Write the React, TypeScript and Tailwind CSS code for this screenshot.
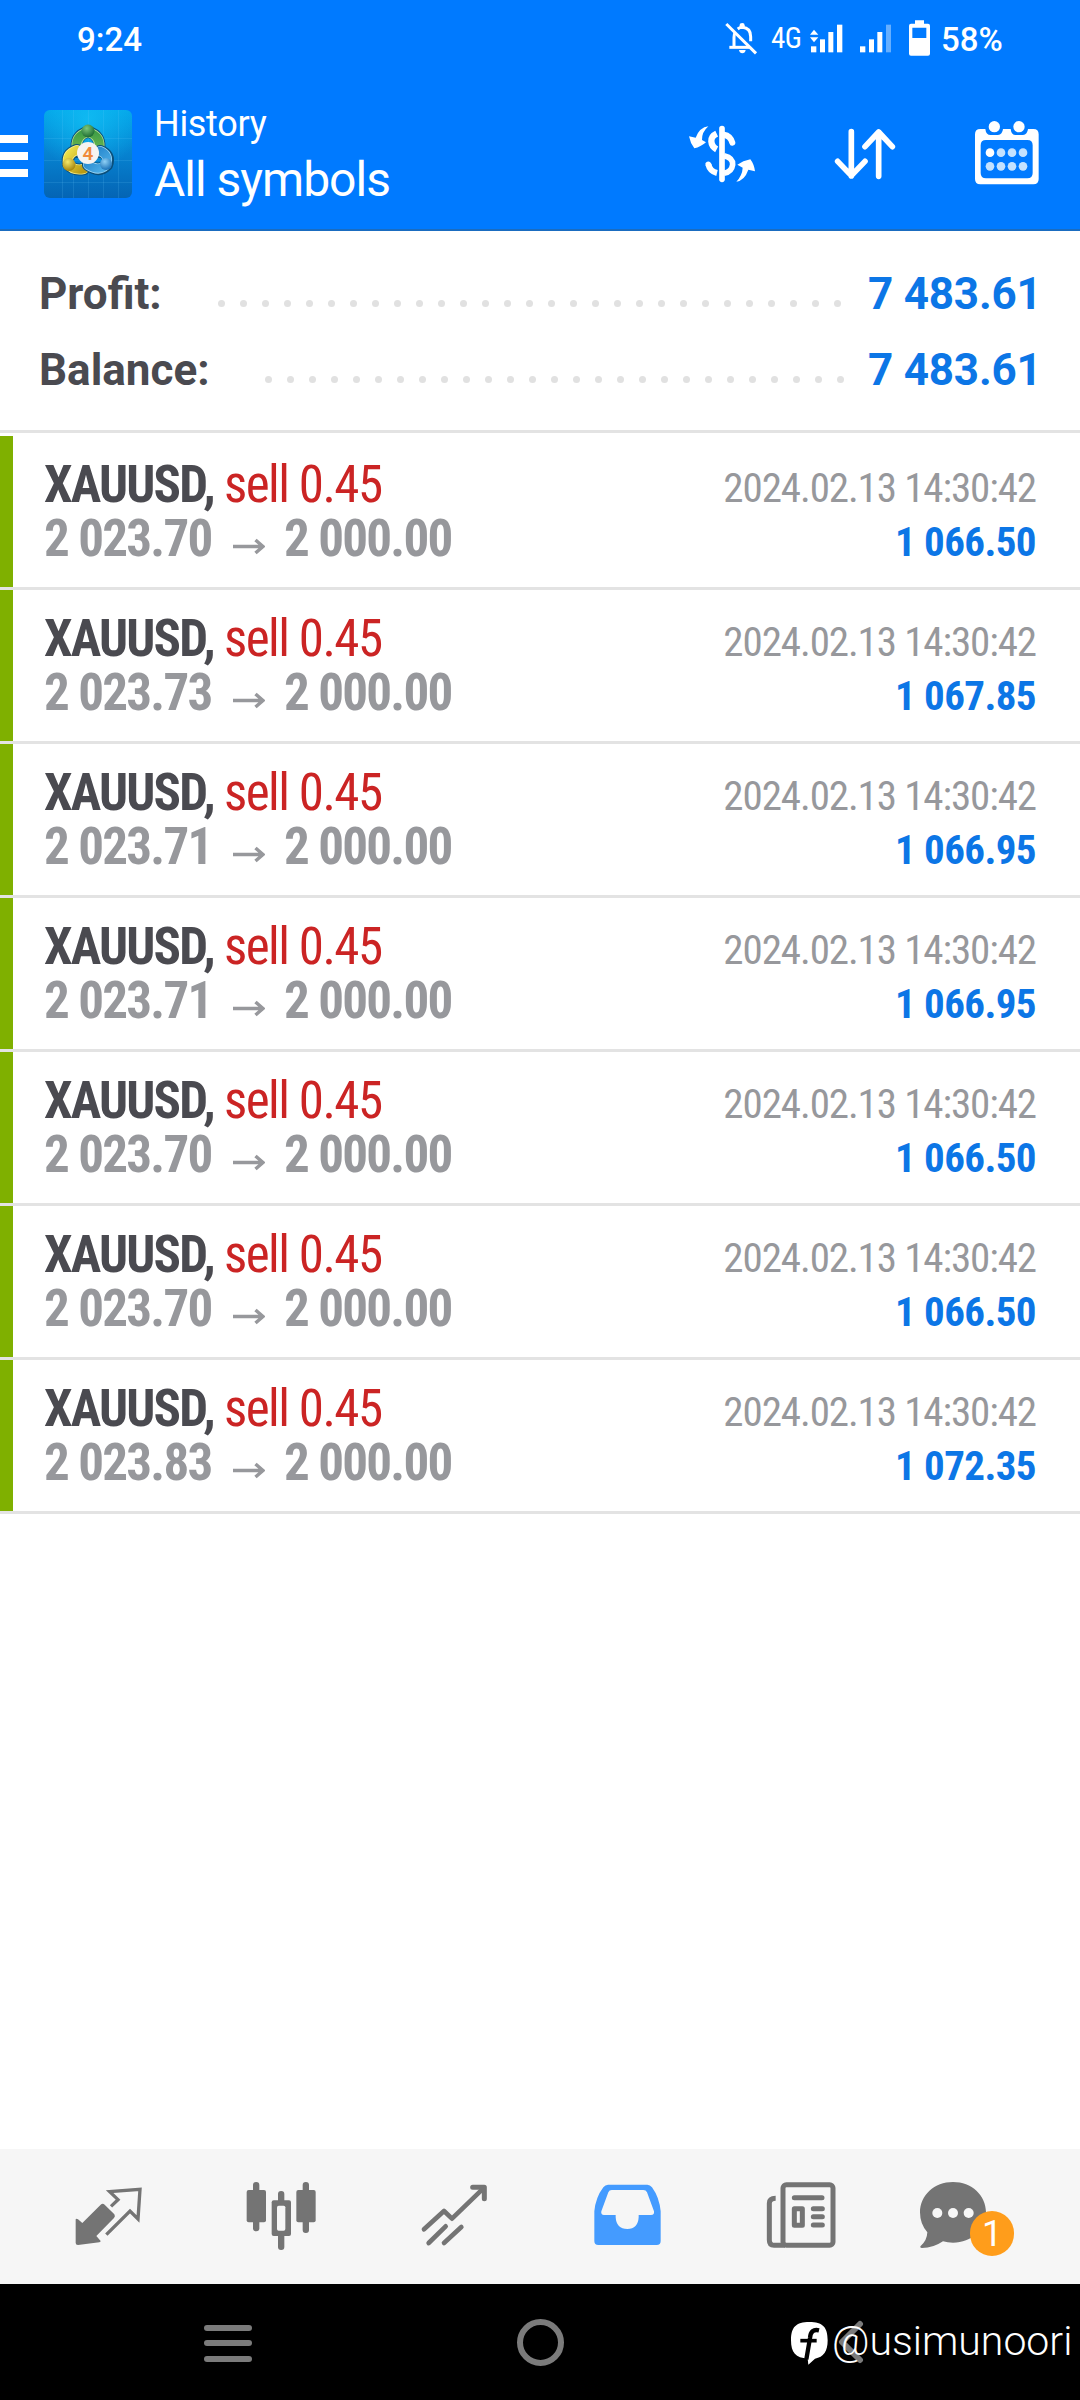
import { ReactNode } from "react";

interface Deal {
  id: number;
  symbol: string;
  side: string;
  volume: string;
  open: string;
  close: string;
  time: string;
  profit: string;
}

const deals: Deal[] = [
  { id: 1, symbol: "XAUUSD", side: "sell", volume: "0.45", open: "2 023.70", close: "2 000.00", time: "2024.02.13 14:30:42", profit: "1 066.50" },
  { id: 2, symbol: "XAUUSD", side: "sell", volume: "0.45", open: "2 023.73", close: "2 000.00", time: "2024.02.13 14:30:42", profit: "1 067.85" },
  { id: 3, symbol: "XAUUSD", side: "sell", volume: "0.45", open: "2 023.71", close: "2 000.00", time: "2024.02.13 14:30:42", profit: "1 066.95" },
  { id: 4, symbol: "XAUUSD", side: "sell", volume: "0.45", open: "2 023.71", close: "2 000.00", time: "2024.02.13 14:30:42", profit: "1 066.95" },
  { id: 5, symbol: "XAUUSD", side: "sell", volume: "0.45", open: "2 023.70", close: "2 000.00", time: "2024.02.13 14:30:42", profit: "1 066.50" },
  { id: 6, symbol: "XAUUSD", side: "sell", volume: "0.45", open: "2 023.70", close: "2 000.00", time: "2024.02.13 14:30:42", profit: "1 066.50" },
  { id: 7, symbol: "XAUUSD", side: "sell", volume: "0.45", open: "2 023.83", close: "2 000.00", time: "2024.02.13 14:30:42", profit: "1 072.35" },
];

/* STATUS BAR */

function StatusBar() {
  return (
    <div className="flex h-[78px] pl-[77px] font-medium text-[33px] leading-[39px]">
      <span className="pt-5">9:24</span>

      <div className="ml-auto flex pr-[75px]">
        {/* muted bell */}
        <svg className="w-10 h-[78px]" viewBox="180 0 120 234" fill="none" stroke="white" strokeWidth="9">
          <path d="M199 72 L288 160" />
          <path d="M208 142 H268" />
          <path d="M222 140 V112 Q222 104 225 98" />
          <path d="M233 87 Q240 82 247 82 Q272 84 272 110 V124" />
          <path d="M239 76 Q239 69 247 69 Q254 69 254 76 V84 H239 Z" fill="white" stroke="none" />
          <path d="M237 150 H257 Q255 160 247 160 Q239 160 237 150 Z" fill="white" stroke="none" />
        </svg>

        <span className="ml-[11px] w-[34px] pt-[19px] text-[29px] font-normal font-stretch-condensed tracking-[-0.5px]">4G</span>

        {/* both SIM signals and battery */}
        <svg className="w-[130px] h-[78px]" viewBox="435 0 390 234" fill="white">
          <path d="M462 89 L475 104 H450 Z" />
          <path d="M450 112 H475 L462 127 Z" />
          <rect x="453" y="139" width="16" height="18" />
          <rect x="480" y="118" width="15" height="39" />
          <rect x="505" y="96" width="15" height="61" />
          <rect x="531" y="74" width="16" height="83" />
          <rect x="600" y="139" width="16" height="18" />
          <rect x="627" y="118" width="15" height="39" />
          <rect x="652" y="96" width="15" height="61" />
          <rect x="678" y="74" width="15" height="83" opacity="0.4" />
          <path
            fillRule="evenodd"
            d="M765 61 H792 V71 H804 Q810 71 810 77 V161 Q810 167 804 167 H753 Q747 167 747 161 V77 Q747 71 753 71 H765 Z M757 83 V114 H799 V83 Z"
          />
        </svg>

        <span className="ml-[6px] w-[64px] pt-5 font-stretch-[93%]">58%</span>
      </div>
    </div>
  );
}

/* HEADER */

function AppLogo() {
  return (
    <svg className="ml-4 mt-[32px] w-[88px] h-[88px]" viewBox="0 0 88 88">
      <defs>
        <linearGradient id="sky" x1="0" y1="0" x2="0" y2="1">
          <stop offset="0" stopColor="#03a5e8" />
          <stop offset="0.5" stopColor="#0682d0" />
          <stop offset="1" stopColor="#0464b4" />
        </linearGradient>
        <radialGradient id="glow" cx="0.5" cy="0.1" r="0.6">
          <stop offset="0" stopColor="#12bff5" stopOpacity="0.8" />
          <stop offset="1" stopColor="#12bff5" stopOpacity="0" />
        </radialGradient>
        <linearGradient id="green" x1="0" y1="0" x2="0" y2="1">
          <stop offset="0" stopColor="#3f9d46" />
          <stop offset="1" stopColor="#6fb850" />
        </linearGradient>
        <linearGradient id="yellow" x1="0" y1="0" x2="1" y2="1">
          <stop offset="0" stopColor="#efe34c" />
          <stop offset="1" stopColor="#b99a14" />
        </linearGradient>
        <linearGradient id="blue" x1="0" y1="0" x2="1" y2="1">
          <stop offset="0" stopColor="#1f7fc8" />
          <stop offset="1" stopColor="#4fb0e8" />
        </linearGradient>
        <radialGradient id="greenBall" cx="0.4" cy="0.3" r="0.7">
          <stop offset="0" stopColor="#7cc77b" />
          <stop offset="1" stopColor="#1c6b31" />
        </radialGradient>
        <radialGradient id="yellowBall" cx="0.4" cy="0.3" r="0.7">
          <stop offset="0" stopColor="#f5e96a" />
          <stop offset="1" stopColor="#a5840d" />
        </radialGradient>
        <radialGradient id="blueBall" cx="0.4" cy="0.3" r="0.7">
          <stop offset="0" stopColor="#8fd0f5" />
          <stop offset="1" stopColor="#1b72b8" />
        </radialGradient>
      </defs>
      <rect width="88" height="88" rx="6" fill="url(#sky)" />
      <rect width="88" height="88" rx="6" fill="url(#glow)" />
      <path d="M0 28.500H88M0 50.500H88M0 72.500H88M18.500 0V88M29.500 0V88M44.500 0V88M59.500 0V88M74.500 0V88" stroke="#6fd0ff" strokeOpacity="0.15" />
      <g fill="none" strokeLinecap="round">
        <path d="M33 42 Q30 25 44 22 Q58 25 55 42" stroke="#0b4f7a" strokeWidth="12" />
        <path d="M33 41 Q30 26 44 22 Q58 26 55 41" stroke="#b5e094" strokeWidth="10" />
        <path d="M33 41 Q30 26 44 22 Q58 26 55 41" stroke="url(#green)" strokeWidth="8.500" />
        <path d="M33 40 Q22 44 24 54 Q29 61 40 59" stroke="#0b4f7a" strokeWidth="12" />
        <path d="M33 40 Q22 44 24 54 Q29 61 40 59" stroke="#f8f18c" strokeWidth="10" />
        <path d="M33 40 Q22 44 24 54 Q29 61 40 59" stroke="url(#yellow)" strokeWidth="8.500" />
        <path d="M56 41 Q67 45 63 55 Q55 63 44 55" stroke="#0b4f7a" strokeWidth="12" />
        <path d="M56 41 Q66 45 62 55 Q55 62 44 55" stroke="#9bd5f5" strokeWidth="10" />
        <path d="M56 41 Q66 45 62 55 Q55 62 44 55" stroke="url(#blue)" strokeWidth="8.500" />
      </g>
      <circle cx="44" cy="21" r="6.500" fill="url(#greenBall)" />
      <circle cx="25" cy="54.500" r="6.500" fill="url(#yellowBall)" />
      <circle cx="62" cy="54" r="6" fill="url(#blueBall)" />
      <circle cx="44" cy="43" r="11" fill="#f6f3f1" />
      <text x="44" y="50" textAnchor="middle" fontFamily="Roboto" fontSize="19" fontWeight="600" fill="#f08a3c">4</text>
    </svg>
  );
}

function Header() {
  return (
    <header className="h-[231px] bg-[#007aff] text-white border-b-2 border-[#1a6cc0]">
      <StatusBar />

      <div className="flex h-[151px]">
        <div className="mt-[57px] flex flex-col gap-[9px]">
          <span className="w-7 h-2 bg-white" />
          <span className="w-7 h-2 bg-white" />
          <span className="w-7 h-2 bg-white" />
        </div>

        <AppLogo />

        <div className="ml-[22px] pt-[25px]">
          <p className="text-[36px] leading-[42px] tracking-[-0.3px]">History</p>
          <p className="mt-[7px] text-[48px] leading-[56px] tracking-[-1px]">All symbols</p>
        </div>

        {/* ACTIONS */}
        <div className="ml-auto flex pr-[33px]">
          <svg className="w-[90px] h-[151px]" viewBox="60 234 270 453">
            <path d="M186 386 V538" stroke="white" strokeWidth="17" strokeLinecap="round" />
            <g fill="none" stroke="white" strokeWidth="17">
              <path d="M170 401 Q153 409 154 424 Q155 440 170 448" strokeWidth="19" />
              <path d="M192 404 Q211 407 217 428" strokeWidth="18" strokeLinecap="round" />
              <path d="M192 467 Q220 474 218 494 Q215 516 192 520" />
              <path d="M145 493 Q150 514 171 519" strokeWidth="18" />
              <path d="M145 493 L146 495" strokeLinecap="round" />
            </g>
            <path d="M145 379 Q119 382 107 413 L87 409 Q91 430 103 445 Q122 441 138 427 L126 420 Q125 397 145 379 Z" fill="white" />
            <path d="M229 545 Q254 541 265 509 L285 514 Q282 492 271 478 Q249 482 232 494 L248 503 Q247 526 229 545 Z" fill="white" />
          </svg>

          <svg className="ml-[55px] w-20 h-[151px]" viewBox="495 234 240 453" fill="none" stroke="white" strokeWidth="17" strokeLinecap="round" strokeLinejoin="round">
            <path d="M574 395 V528 M533 484 L574 527 L615 484" />
            <path d="M656 529 V396 M615 440 L656 396 L697 440" />
          </svg>

          <svg className="ml-[62px] w-20 h-[151px]" viewBox="921 234 240 453" fill="white">
            <path
              fillRule="evenodd"
              d="M961 387 H976 Q978 405 992 405 H1014 Q1027 404 1029 387 H1052 Q1054 405 1067 405 H1089 Q1102 404 1104 387 H1120 Q1136 387 1136 403 V537 Q1136 553 1120 553 H961 Q945 553 945 537 V403 Q945 387 961 387 Z M978 420 Q962 420 962 436 V519 Q962 535 978 535 H1102 Q1118 535 1118 519 V436 Q1118 420 1102 420 Z"
            />
            <circle cx="1003" cy="380" r="17" />
            <circle cx="1077" cy="380" r="17" />
            <circle cx="990" cy="458" r="13" />
            <g fill="#c4e2ff">
              <circle cx="1023" cy="458" r="13" />
              <circle cx="1056" cy="458" r="13" />
              <circle cx="1089" cy="458" r="13" />
              <circle cx="990" cy="499" r="13" />
              <circle cx="1023" cy="499" r="13" />
              <circle cx="1056" cy="499" r="13" />
              <circle cx="1089" cy="499" r="13" />
            </g>
          </svg>
        </div>
      </div>
    </header>
  );
}

/* SUMMARY */

function SummaryRow({ label, value, dots, offset }: { label: string; value: string; dots: number; offset: string }) {
  return (
    <div className="flex h-[76px] text-[44px] leading-[76px] font-bold whitespace-nowrap">
      <span className="text-[#4a4a50]">{label}</span>
      <div className={`ml-auto flex gap-[15px] pt-[44px] ${offset}`}>
        {Array.from({ length: dots }, (_, i) => (
          <span key={i} className="w-[7px] h-[7px] rounded-full bg-[#e1e1e1]" />
        ))}
      </div>
      <span className="w-[169px] text-[#0c76e6] tracking-[-0.2px]">{value}</span>
    </div>
  );
}

/* DEALS */

function DealRow({ deal }: { deal: Deal }) {
  return (
    <li className="flex h-[154px] border-b-3 border-[#e3e3e3] font-stretch-condensed">
      <span className="w-[13px] bg-[#7fb000]" />

      <div className="pl-[31px] pt-[22px] text-[51px] leading-[54px] whitespace-pre">
        <p>
          <span className="font-bold text-[#4a4a50] tracking-[-1.8px]">{deal.symbol}, </span>
          <span className="text-[#cb2424] tracking-[-1.5px]">{deal.side} {deal.volume}</span>
        </p>
        <p className="flex font-bold text-[#97989c] tracking-[-1.7px]">
          <span className="w-[187px]">{deal.open}</span>
          <svg className="mt-[20px] w-[34px] h-[28px]" viewBox="0 0 34 28" fill="none" stroke="#97989c" strokeWidth="3.500">
            <path d="M2 14.500 H32 M24.500 8 L32 14.500 L24.500 21" />
          </svg>
          <span className="ml-[19px]">{deal.close}</span>
        </p>
      </div>

      <div className="ml-auto pr-11 pt-[25px] text-right text-[41px] leading-[54px]">
        <p className="text-[#97989c] tracking-[-1.1px]">{deal.time}</p>
        <p className="font-bold text-[#0c76e6] tracking-[-0.6px]">{deal.profit}</p>
      </div>
    </li>
  );
}

/* BOTTOM TABS */

function Tab({ box, badge, children }: { box: string; badge?: number; children: ReactNode }) {
  return (
    <div className="relative w-[173px] h-[135px]">
      <svg className="w-[173px] h-[135px]" viewBox={box} fill="#747474">
        {children}
      </svg>
      {badge && (
        <span className="absolute left-[83px] top-[62px] w-[44px] h-[45px] rounded-full bg-[#ff9d1b] text-white text-[36px] leading-[46px] text-center">
          {badge}
        </span>
      )}
    </div>
  );
}

function BottomTabs() {
  return (
    <nav className="flex h-[135px] pl-[22px] bg-[#f6f6f6]">
      {/* quotes */}
      <Tab box="66 27 519 405">
        <path d="M302 194 Q308 189 314 194 L343 223 Q347 229 342 234 L289 288 L302 303 Q302 306 298 307 L234 315 Q227 315 227 309 V238 Q229 234 234 238 L247 249 Z" />
        <path d="M333 199 L354 179 L329 155 L420 148 L414 237 L390 213 L319 284" fill="none" stroke="#747474" strokeWidth="10" strokeLinejoin="miter" />
      </Tab>

      {/* charts */}
      <Tab box="585 27 519 405">
        <rect x="759" y="126" width="19" height="148" rx="9" />
        <rect x="740" y="150" width="58" height="97" rx="6" />
        <rect x="908" y="126" width="19" height="153" rx="9" />
        <rect x="889" y="150" width="58" height="97" rx="6" />
        <rect x="834" y="153" width="19" height="177" rx="9" />
        <rect x="815" y="181" width="58" height="107" rx="6" />
        <rect x="831" y="197" width="25" height="75" rx="5" fill="#f6f6f6" />
      </Tab>

      {/* trade */}
      <Tab box="24 27 519 405">
        <g fill="none" stroke="#747474" strokeWidth="14" strokeLinecap="round">
          <path d="M192 268 L252 213 L276 236 L370 145" strokeLinejoin="round" />
          <path d="M338 142 H373 V176" strokeWidth="15" strokeLinejoin="round" />
          <path d="M206 309 L257 259" />
          <path d="M252 309 L304 261" />
        </g>
      </Tab>

      {/* history, selected */}
      <Tab box="543 27 519 405">
        <path
          fill="#449bff"
          fillRule="evenodd"
          d="M744 134 H862 Q870 134 876 142 Q898 172 902 214 V303 Q902 315 890 315 H715 Q703 315 703 303 V214 Q707 172 730 142 Q736 134 744 134 Z M755 150 Q748 150 745 157 L724 214 Q722 225 732 225 H767 V232 Q769 267 802 267 Q834 267 836 232 V225 H873 Q884 225 882 214 L861 157 Q858 150 850 150 Z"
        />
      </Tab>

      {/* news */}
      <Tab box="-18 27 519 405">
        <g fill="none" stroke="#747474">
          <rect x="189" y="134" width="150" height="182" rx="10" strokeWidth="15" />
          <path d="M167 175 Q148 175 148 190 V300 Q148 316 162 316 H195" strokeWidth="15" />
          <path d="M223 173 H306 M280 206 H307 M280 230 H307 M280 255 H307" strokeWidth="15" strokeLinecap="round" />
          <rect x="223" y="206" width="24" height="50" strokeWidth="15" strokeLinejoin="round" />
        </g>
      </Tab>

      {/* messages */}
      <Tab box="501 27 519 405" badge={1}>
        <path d="M699 126 C755 126 798 166 798 217 C798 268 755 308 699 308 Q683 308 669 304 Q640 324 606 324 Q598 323 602 318 Q621 302 622 277 Q600 252 600 217 C600 166 643 126 699 126 Z" />
        <g fill="#f6f6f6">
          <circle cx="652" cy="219" r="15" />
          <circle cx="699" cy="219" r="15" />
          <circle cx="746" cy="219" r="15" />
        </g>
      </Tab>
    </nav>
  );
}

/* SYSTEM NAVIGATION */

function SystemNav() {
  return (
    <div className="relative flex items-center h-[116px] pl-[204px] bg-black">
      <div className="flex flex-col gap-[9.500px] pt-0.5">
        <span className="w-12 h-1.5 rounded-full bg-[#7b7b7b]" />
        <span className="w-12 h-1.5 rounded-full bg-[#7b7b7b]" />
        <span className="w-12 h-1.5 rounded-full bg-[#7b7b7b]" />
      </div>
      <span className="ml-[265px] w-[47px] h-[47px] rounded-full border-6 border-[#7b7b7b]" />
      <svg className="ml-[274px] w-[26px] h-[44px]" viewBox="0 0 26 44" fill="none" stroke="#7b7b7b" strokeWidth="6" strokeLinecap="round" strokeLinejoin="round">
        <path d="M22 4 L4 22 L22 40" />
      </svg>

      {/* watermark */}
      <div className="absolute left-[791px] top-[33px] flex text-white">
        <svg className="mt-[5px] w-[38px] h-[43px]" viewBox="0 0 114 129">
          <path d="M55 0 C95 0 110 15 110 55 C110 88 98 106 72 110 L52 128 L50 110 C14 108 0 92 0 55 C0 15 15 0 55 0 Z" fill="white" />
          <path d="M84 25 Q59 19 57 48 L46 112" stroke="black" strokeWidth="13" fill="none" />
          <path d="M28 56 H77" stroke="black" strokeWidth="11" />
        </svg>
        <span className="ml-[3px] text-[41px] leading-[48px] font-[350]">@usimunoori</span>
      </div>
    </div>
  );
}

export default function App() {
  return (
    <div className="flex flex-col w-[1080px] h-[2400px] overflow-hidden bg-white font-['Roboto',sans-serif]">
      <Header />

      <section className="h-[202px] pt-[25px] pl-[39px] pr-[43px] border-b-3 border-[#e3e3e3]">
        <SummaryRow label="Profit:" value="7 483.61" dots={29} offset="mr-[27px]" />
        <SummaryRow label="Balance:" value="7 483.61" dots={27} offset="mr-[24px]" />
      </section>

      <ul className="flex-1 pt-[3px]">
        {deals.map((deal) => (
          <DealRow key={deal.id} deal={deal} />
        ))}
      </ul>

      <BottomTabs />
      <SystemNav />
    </div>
  );
}
